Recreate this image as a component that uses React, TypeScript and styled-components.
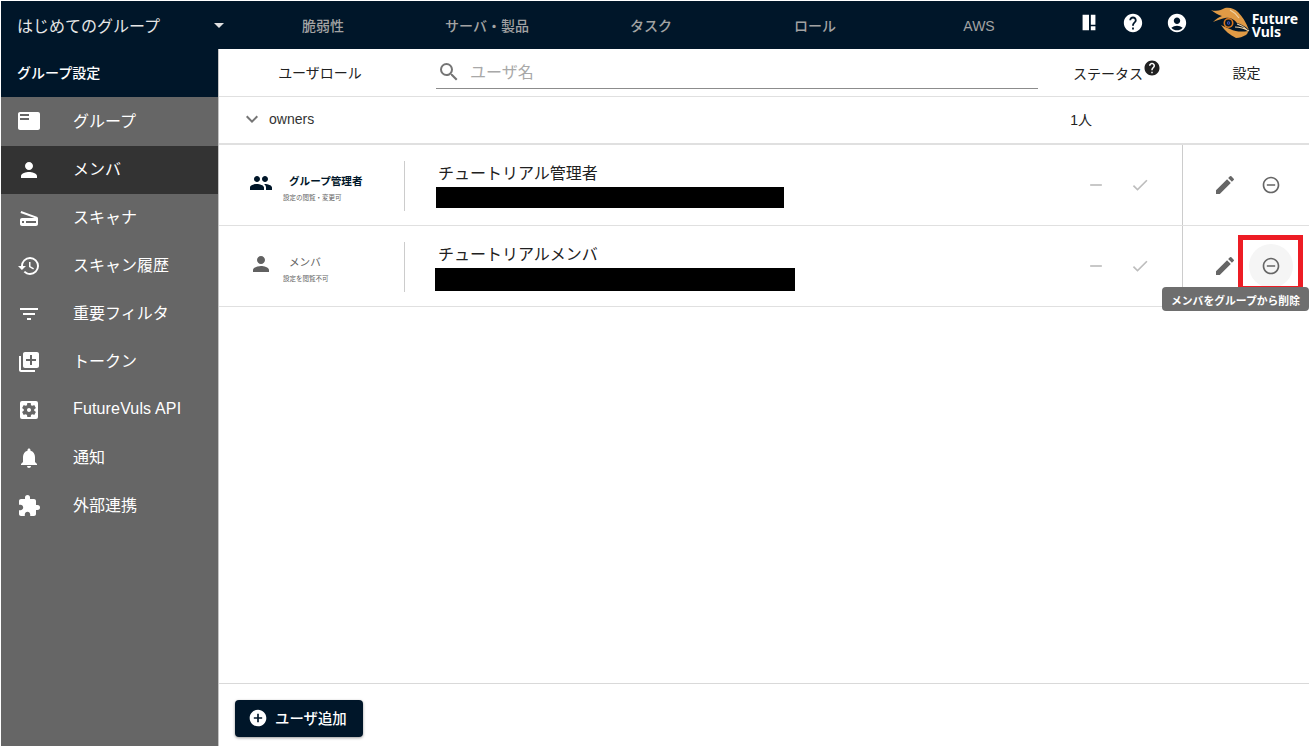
import React from 'react';
import styled, { createGlobalStyle } from 'styled-components';
import {
  MdAccountCircle,
  MdAddCircle,
  MdArrowDropDown,
  MdCheck,
  MdEdit,
  MdExpandMore,
  MdExtension,
  MdFeaturedPlayList,
  MdFilterList,
  MdHelp,
  MdLibraryAdd,
  MdNotifications,
  MdPeople,
  MdPerson,
  MdRemove,
  MdRemoveCircleOutline,
  MdRestore,
  MdScanner,
  MdSearch,
  MdSettingsApplications,
} from 'react-icons/md';

const FONT = '"Liberation Sans", "Noto Sans CJK JP", sans-serif';

const GlobalStyle = createGlobalStyle`
  html, body {
    margin: 0;
    padding: 0;
    background: #fff;
    font-family: ${FONT};
  }
  * {
    box-sizing: border-box;
  }
`;

const NAV_ITEMS = [
  { label: 'グループ', icon: MdFeaturedPlayList },
  { label: 'メンバ', icon: MdPerson, active: true },
  { label: 'スキャナ', icon: MdScanner },
  { label: 'スキャン履歴', icon: MdRestore },
  { label: '重要フィルタ', icon: MdFilterList },
  { label: 'トークン', icon: MdLibraryAdd },
  { label: 'FutureVuls API', icon: MdSettingsApplications },
  { label: '通知', icon: MdNotifications },
  { label: '外部連携', icon: MdExtension },
];

const TABS = ['脆弱性', 'サーバ・製品', 'タスク', 'ロール', 'AWS'];

const MEMBERS = [
  {
    role: 'グループ管理者',
    note: '設定の閲覧・変更可',
    name: 'チュートリアル管理者',
    icon: MdPeople,
    admin: true,
    maskWidth: 348,
    maskHeight: 21,
    maskIndent: 0,
  },
  {
    role: 'メンバ',
    note: '設定を閲覧不可',
    name: 'チュートリアルメンバ',
    icon: MdPerson,
    admin: false,
    maskWidth: 360,
    maskHeight: 23,
    maskIndent: -1,
  },
];

const Logo = () => (
  <svg width="40" height="32" viewBox="0 0 40 32">
    {/* upper and lower wings of the eye */}
    <path d="M1 3 C7 5 11 3 15 1 C20 0 25 2 28 5 C32 9 36 15 39 23 C35 19 31 17 27 16 C24 12 20 10 15 11 C11 12 7 13 3 15 C6 12 9 10 12 9 C8 8 4 5 1 3 Z" fill="#e09a45" />
    <path d="M11 18 C14 19 16 21 20 22 C26 25 32 25 38 24 C38 26 37 27 36 28 C32 30 30 31 26 31 C20 28 15 24 11 18 Z" fill="#e09a45" />
    <path d="M25 20 C30 20 34 21 39 24 M27 17 C31 18 34 20 37 23 M20 3 C24 5 27 8 29 11" stroke="#f2d3a4" strokeWidth="1.2" fill="none" />
    <circle cx="18.5" cy="16" r="5" fill="#d9761c" />
    <circle cx="18.5" cy="16" r="3.4" fill="#001629" />
    <circle cx="18.5" cy="16" r="1.7" fill="#3f51b5" />
    <circle cx="18.5" cy="16" r="0.7" fill="#001629" />
  </svg>
);

const App: React.FC = () => {
  return (
    <Page>
      <GlobalStyle />
      <TopBar>
        <GroupSelect>
          <GroupName>はじめてのグループ</GroupName>
          <MdArrowDropDown size={24} />
        </GroupSelect>
        <Tabs>
          {TABS.map(tab => (
            <Tab key={tab}>{tab}</Tab>
          ))}
        </Tabs>
        <TopActions>
          <TopIcon>
            <svg width="24" height="24" viewBox="0 0 24 24" fill="#fff">
              <path d="M5 3h7v17H5zM14 3h5v11h-5zM14 15.5h5V20h-5z" />
            </svg>
          </TopIcon>
          <TopIcon>
            <MdHelp size={22} />
          </TopIcon>
          <TopIcon>
            <MdAccountCircle size={22} />
          </TopIcon>
          <Brand>
            <Logo />
            <BrandText>
              <span>Future</span>
              <span>Vuls</span>
            </BrandText>
          </Brand>
        </TopActions>
      </TopBar>
      <Body>
        <Sidebar>
          <SidebarTitle>グループ設定</SidebarTitle>
          {NAV_ITEMS.map(item => (
            <NavItem key={item.label} $active={!!item.active}>
              <NavIcon>
                <item.icon size={24} />
              </NavIcon>
              <NavLabel>{item.label}</NavLabel>
            </NavItem>
          ))}
        </Sidebar>
        <Main>
          <HeaderRow>
            <RoleHeading>ユーザロール</RoleHeading>
            <SearchBox>
              <MdSearch size={24} />
              <SearchPlaceholder>ユーザ名</SearchPlaceholder>
            </SearchBox>
            <StatusHeading>
              ステータス
              <MdHelp size={18} />
            </StatusHeading>
            <SettingsHeading>設定</SettingsHeading>
          </HeaderRow>
          <OwnerRow>
            <MdExpandMore size={24} />
            <OwnerName>owners</OwnerName>
            <OwnerCount>1人</OwnerCount>
          </OwnerRow>
          {MEMBERS.map((member, index) => (
            <MemberRow key={member.name}>
              <RoleCell>
                <RoleIcon $admin={member.admin}>
                  <member.icon size={24} />
                </RoleIcon>
                <RoleText>
                  <RoleName $admin={member.admin}>{member.role}</RoleName>
                  <RoleNote>{member.note}</RoleNote>
                </RoleText>
              </RoleCell>
              <NameCell>
                <MemberName>{member.name}</MemberName>
                <Mask
                  style={{
                    width: member.maskWidth,
                    height: member.maskHeight,
                    marginLeft: member.maskIndent,
                  }}
                />
              </NameCell>
              <StatusCell>
                <MdRemove size={20} />
                <MdCheck size={20} />
              </StatusCell>
              <ActionCell>
                <ActionButton>
                  <MdEdit size={24} />
                </ActionButton>
                <ActionButton $hover={index === 1}>
                  <MdRemoveCircleOutline size={20} />
                  {index === 1 && (
                    <>
                      <Highlight />
                      <Tooltip>メンバをグループから削除</Tooltip>
                    </>
                  )}
                </ActionButton>
              </ActionCell>
            </MemberRow>
          ))}
          <Spacer />
          <Footer>
            <AddButton>
              <MdAddCircle size={20} />
              <AddLabel>ユーザ追加</AddLabel>
            </AddButton>
          </Footer>
        </Main>
      </Body>
    </Page>
  );
};

const Page = styled.div`
  display: flex;
  flex-direction: column;
  width: 1309px;
  height: 746px;
  padding: 1px 0 0 1px;
  overflow: hidden;
  background: #fff;
`;

const TopBar = styled.header`
  display: flex;
  align-items: center;
  height: 48px;
  flex-shrink: 0;
  background: #001629;
  color: #fff;
`;

const GroupSelect = styled.div`
  display: flex;
  align-items: center;
  justify-content: space-between;
  width: 218px;
  padding-left: 16px;

  svg {
    color: #e0e0e0;
    margin-right: -12px;
  }
`;

const GroupName = styled.span`
  font-size: 16px;
  color: #e6e6e6;
  margin-top: -1px;
`;

const Tabs = styled.nav`
  display: grid;
  grid-template-columns: repeat(5, 164px);
  margin: 1px 0 0 22px;
`;

const Tab = styled.div`
  text-align: center;
  font-size: 14px;
  line-height: 20px;
  font-weight: 500;
  color: #a3a3a3;
`;

const TopActions = styled.div`
  display: flex;
  align-items: center;
  margin-left: auto;
  padding-bottom: 4px;
`;

const TopIcon = styled.div`
  display: flex;
  align-items: center;
  justify-content: center;
  width: 22px;
  height: 24px;
  margin-right: 22px;
  color: #fff;
`;

const Brand = styled.div`
  display: flex;
  align-items: center;
  gap: 2px;
  margin-right: 11px;
`;

const BrandText = styled.div`
  display: flex;
  flex-direction: column;
  margin-top: 4px;
  font-family: "Noto Sans", ${FONT};
  font-size: 14px;
  font-weight: 700;
  line-height: 13px;
  color: #fff;
`;

const Body = styled.div`
  display: flex;
  flex: 1;
  min-height: 0;
`;

const Sidebar = styled.aside`
  display: flex;
  flex-direction: column;
  width: 218px;
  flex-shrink: 0;
  background: #666;
  border-right: 1px solid #c4c4c4;
`;

const SidebarTitle = styled.div`
  display: flex;
  align-items: center;
  height: 48px;
  padding: 0 0 2px 16px;
  background: #001629;
  color: #fff;
  font-size: 14px;
  font-weight: 500;
`;

const NavLabel = styled.span`
  margin-top: -5px;
`;

const NavItem = styled.div<{ $active: boolean }>`
  display: flex;
  align-items: center;
  height: 48px;
  margin-top: ${({ $active }) => ($active ? '1px' : '0')};
  padding-left: 16px;
  background: ${({ $active }) => ($active ? '#333' : 'transparent')};
  color: #fff;
  font-size: 16px;

  &:nth-child(2) ${NavLabel} {
    margin-top: -3px;
  }

  &:nth-child(8) ${NavLabel} {
    margin-top: -2px;
    letter-spacing: 0.15px;
  }
`;

const NavIcon = styled.div`
  display: flex;
  width: 56px;
  color: #fff;
`;

const Main = styled.main`
  display: flex;
  flex-direction: column;
  flex: 1;
  min-width: 0;
`;

const HeaderRow = styled.div`
  display: flex;
  align-items: center;
  height: 48px;
  flex-shrink: 0;
  border-bottom: 1px solid #e0e0e0;
  color: #212121;
  font-size: 14px;
`;

const RoleHeading = styled.div`
  width: 202px;
  margin-top: -1px;
  text-align: center;
`;

const SearchBox = styled.div`
  display: flex;
  align-items: center;
  gap: 9px;
  width: 602px;
  height: 32px;
  margin-left: 15px;
  padding-left: 1px;
  border-bottom: 1px solid #8c8c8c;
  color: #757575;

  svg {
    margin-top: -1px;
  }
`;

const SearchPlaceholder = styled.span`
  margin-top: -2px;
  font-size: 16px;
  color: #a8a8a8;
`;

const StatusHeading = styled.div`
  display: flex;
  align-items: flex-start;
  width: 144px;
  padding-left: 35px;
  margin-top: 1px;
  color: #212121;

  svg {
    margin-top: -4px;
  }
`;

const SettingsHeading = styled.div`
  flex: 1;
  margin-top: -1px;
  text-align: center;
  padding-left: 2px;
`;

const OwnerRow = styled.div`
  display: flex;
  align-items: center;
  height: 48px;
  flex-shrink: 0;
  padding: 0 0 2px 21px;
  border-bottom: 2px solid #e0e0e0;
  color: #333;
  font-size: 14px;

  svg {
    color: #757575;
  }
`;

const OwnerName = styled.span`
  margin-left: 5px;
`;

const OwnerCount = styled.span`
  margin-left: 756px;
  color: #212121;
`;

const MemberRow = styled.div`
  display: flex;
  align-items: stretch;
  height: 81px;
  flex-shrink: 0;
  border-bottom: 1px solid #e0e0e0;
`;

const RoleCell = styled.div`
  display: flex;
  align-items: center;
  width: 186px;
  height: 50px;
  margin-top: 16px;
  padding-left: 30px;
  border-right: 1px solid #ccc;
`;

const RoleIcon = styled.div<{ $admin: boolean }>`
  display: flex;
  width: 24px;
  margin-top: -6px;
  color: ${({ $admin }) => ($admin ? '#001629' : '#616161')};
`;

const RoleText = styled.div`
  display: flex;
  flex-direction: column;
  margin-left: 10px;
  padding-top: 4px;
`;

const RoleName = styled.span<{ $admin: boolean }>`
  margin-left: 6px;
  font-size: 10.6px;
  line-height: 14px;
  font-weight: ${({ $admin }) => ($admin ? 700 : 400)};
  color: ${({ $admin }) => ($admin ? '#001629' : '#616161')};
`;

const RoleNote = styled.span`
  margin-top: 5px;
  font-size: 6.5px;
  line-height: 9px;
  color: #616161;
`;

const NameCell = styled.div`
  display: flex;
  flex-direction: column;
  width: 662px;
  padding: 18px 0 0 31px;
`;

const MemberName = styled.div`
  margin: 0 0 2px 2px;
  font-size: 16px;
  line-height: 22px;
  color: #212121;
`;

const Mask = styled.div`
  background: #000;
`;

const StatusCell = styled.div`
  display: flex;
  align-items: center;
  justify-content: flex-end;
  gap: 24px;
  width: 116px;
  height: 100%;
  padding-right: 32px;
  color: #bdbdbd;
  border-right: 1px solid #ccc;
`;

const ActionCell = styled.div`
  display: flex;
  align-items: center;
  padding-left: 20px;
  gap: 2px;
`;

const ActionButton = styled.div<{ $hover?: boolean }>`
  position: relative;
  display: flex;
  align-items: center;
  justify-content: center;
  width: 44px;
  height: 44px;
  border-radius: 50%;
  background: ${({ $hover }) => ($hover ? '#f5f5f5' : 'transparent')};
  color: #666;
`;

const Highlight = styled.div`
  position: absolute;
  top: -9px;
  left: -11px;
  width: 65px;
  height: 56px;
  border: 5px solid #ed1c24;
  pointer-events: none;
`;

const Tooltip = styled.div`
  position: absolute;
  top: 43px;
  right: -16px;
  width: 147px;
  height: 24px;
  padding-top: 1px;
  display: flex;
  align-items: center;
  justify-content: center;
  white-space: nowrap;
  border-radius: 4px;
  background: #6e6e6e;
  color: #fff;
  font-size: 10.8px;
  font-weight: 700;
`;

const Spacer = styled.div`
  flex: 1;
`;

const Footer = styled.div`
  display: flex;
  align-items: flex-start;
  height: 63px;
  padding: 16px 0 0 16px;
  border-top: 1px solid #d9d9d9;
`;

const AddButton = styled.div`
  display: flex;
  align-items: center;
  gap: 7px;
  height: 37px;
  width: 128px;
  padding: 0 0 1px 13px;
  border-radius: 4px;
  background: #001629;
  color: #fff;
  font-size: 14.4px;
  font-weight: 500;
  box-shadow: 0 1px 3px rgba(0, 0, 0, 0.4);
`;

const AddLabel = styled.span`
  margin-top: -2px;
`;

export default App;
